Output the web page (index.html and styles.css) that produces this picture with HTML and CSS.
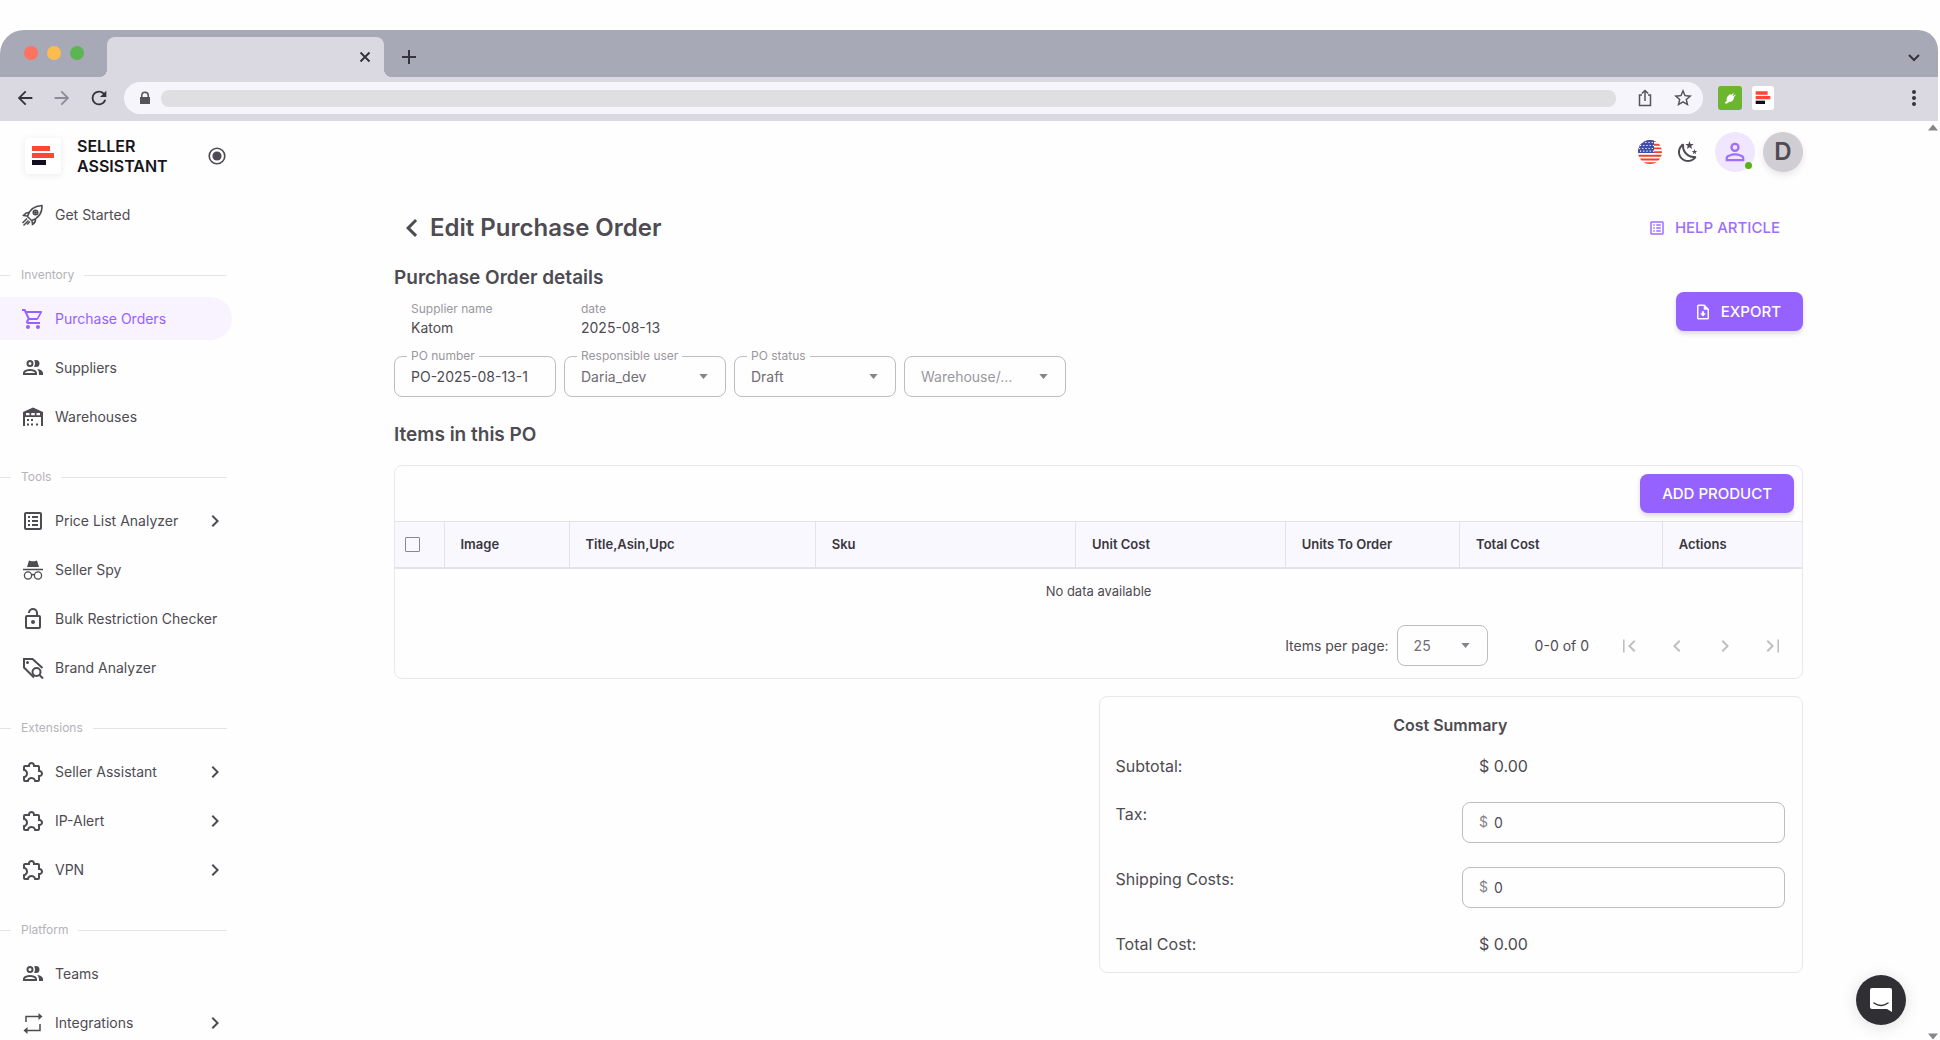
FILE: index.html
```html
<!DOCTYPE html>
<html lang="en">
<head>
    <meta charset="UTF-8">
    <meta name="viewport" content="width=device-width, initial-scale=1.0">
    <title>Edit Purchase Order</title>
    <link rel="stylesheet" href="styles.css">
</head>
<body>
    <!-- shared icons -->
    <svg class="sprite" aria-hidden="true">
        <symbol id="chevron-right" viewBox="0 0 24 24"><path d="M8.59 16.58L13.17 12L8.59 7.41L10 6l6 6-6 6z"/></symbol>
        <symbol id="chevron-left" viewBox="0 0 24 24"><path d="M15.41 16.58L10.83 12l4.58-4.59L14 6l-6 6 6 6z"/></symbol>
        <symbol id="people" viewBox="0 0 24 24"><path d="M13.07 10.41A5 5 0 0 0 13.07 4.59A3.39 3.39 0 0 1 15 4A3.5 3.5 0 0 1 15 11A3.39 3.39 0 0 1 13.07 10.41M5.5 7.5A3.5 3.5 0 1 1 9 11A3.5 3.5 0 0 1 5.5 7.5M7.5 7.5A1.5 1.5 0 1 0 9 6A1.5 1.5 0 0 0 7.5 7.5M16 17V19H2V17S2 13 9 13 16 17 16 17M14 17C13.86 16.22 12.67 15 9 15S4.07 16.31 4 17M15.95 13A5.32 5.32 0 0 1 18 17V19H22V17S22 13.37 15.94 13Z"/></symbol>
        <symbol id="puzzle" viewBox="0 0 24 24"><path d="M22,13.5C22,15.26 20.7,16.72 19,16.96V20A2,2 0 0,1 17,22H13.2V21.7A2.7,2.7 0 0,0 10.5,19C9,19 7.8,20.21 7.8,21.7V22H4A2,2 0 0,1 2,20V16.2H2.3C3.79,16.2 5,15 5,13.5C5,12 3.79,10.8 2.3,10.8H2V7A2,2 0 0,1 4,5H7.04C7.28,3.3 8.74,2 10.5,2C12.26,2 13.72,3.3 13.96,5H17A2,2 0 0,1 19,7V10.04C20.7,10.28 22,11.74 22,13.5M17,15H18.5A1.5,1.5 0 0,0 20,13.5A1.5,1.5 0 0,0 18.5,12H17V7H12V5.5A1.5,1.5 0 0,0 10.5,4A1.5,1.5 0 0,0 9,5.5V7H4V9.12C5.76,9.8 7,11.5 7,13.5C7,15.5 5.75,17.2 4,17.88V20H6.12C6.8,18.25 8.5,17 10.5,17C12.5,17 14.2,18.25 14.88,20H17V15Z"/></symbol>
        <symbol id="list-box" viewBox="0 0 24 24"><path d="M11 15H17V17H11V15M9 7H7V9H9V7M11 13H17V11H11V13M11 9H17V7H11V9M9 11H7V13H9V11M21 5V19C21 20.1 20.1 21 19 21H5C3.9 21 3 20.1 3 19V5C3 3.9 3.9 3 5 3H19C20.1 3 21 3.9 21 5M19 5H5V19H19V5M9 15H7V17H9V15Z"/></symbol>
        <symbol id="arrow-left" viewBox="0 0 24 24"><path d="M20,11V13H8L13.5,18.5L12.08,19.92L4.16,12L12.08,4.08L13.5,5.5L8,11H20Z"/></symbol>
        <symbol id="page-first" viewBox="0 0 24 24"><path d="M18.41 16.59L13.82 12l4.59-4.59L17 6l-6 6 6 6zM6 5.500h1.600v13H6z"/></symbol>
        <symbol id="brand" viewBox="0 0 24 24"><path fill="#ff4636" d="M1 2h18v5H1zM1 9h22v5H1z"/><path fill="#120c1e" d="M1 16h14v5H1z"/></symbol>
        <symbol id="caret" viewBox="0 0 10 6"><path d="M0 0h10L5 6z"/></symbol>
    </svg>

    <div class="browser">
        <div class="tab-strip">
            <div class="lights"><span class="light red"></span><span class="light yellow"></span><span class="light green"></span></div>
            <div class="tab">
                <button class="chrome-btn" aria-label="Close tab"><svg class="icon-14" viewBox="0 0 14 14"><path class="line" d="M2.500 2.500l9 9M11.500 2.500l-9 9"/></svg></button>
            </div>
            <button class="chrome-btn" aria-label="New tab"><svg class="icon-16" viewBox="0 0 16 16"><path class="line" d="M8 1v14M1 8h14"/></svg></button>
            <button class="chrome-btn tab-search" aria-label="Search tabs"><svg class="icon-14" viewBox="0 0 14 14"><path class="line" d="M2 5l5 5 5-5"/></svg></button>
        </div>
        <div class="toolbar">
            <div class="nav-buttons">
                <button class="chrome-btn" aria-label="Back"><svg class="icon-22"><use href="#arrow-left"/></svg></button>
                <button class="chrome-btn faded" aria-label="Forward"><svg class="icon-22 flip"><use href="#arrow-left"/></svg></button>
                <button class="chrome-btn" aria-label="Reload"><svg class="icon-22" viewBox="0 0 24 24"><path d="M17.65,6.35C16.2,4.9 14.21,4 12,4A8,8 0 0,0 4,12A8,8 0 0,0 12,20C15.73,20 18.84,17.45 19.73,14H17.65C16.83,16.33 14.61,18 12,18A6,6 0 0,1 6,12A6,6 0 0,1 12,6C13.66,6 15.14,6.69 16.22,7.78L13,11H20V4L17.65,6.35Z"/></svg></button>
            </div>
            <div class="omnibox">
                <svg class="icon-14" viewBox="0 0 14 14"><path d="M2 6h1V4.500a4 4 0 0 1 8 0V6h1v7H2zM4.500 6h5V4.500a2.500 2.500 0 0 0-5 0z"/></svg>
                <div class="url"></div>
                <svg class="icon-18" viewBox="0 0 18 18"><path class="line thin" d="M6 6H3.500v10.500h11V6H12M9 12V1.500M5.800 4.500L9 1.500l3.200 3"/></svg>
                <svg class="icon-18 star" viewBox="2 2 20 20"><path d="M12,15.39L8.24,17.66L9.23,13.38L5.91,10.5L10.29,10.13L12,6.09L13.71,10.13L18.09,10.5L14.77,13.38L15.76,17.66M22,9.24L14.81,8.63L12,2L9.19,8.63L2,9.24L7.45,13.97L5.82,21L12,17.27L18.18,21L16.54,13.97L22,9.24Z"/></svg>
            </div>
            <div class="extensions">
                <span class="ext ext-plug"><svg class="icon-14" viewBox="0 0 14 14"><path fill="#fff" d="M5.500 4.500L7 3.200l1.300.6L10.500 2l.3.500-1.300 2 .8.600 2-1.500.2.600-1.700 2c.3 2.500-1.600 4.800-4.300 4.600L4 12.500H2.200L1.800 12l2-2.500C3.200 7.600 4 5.700 5.500 4.500z"/></svg></span>
                <span class="ext ext-brand"><svg class="icon-16"><use href="#brand"/></svg></span>
            </div>
            <button class="chrome-btn menu-dots" aria-label="Menu"><svg class="icon-18" viewBox="0 0 18 18"><circle cx="9" cy="3" r="2"/><circle cx="9" cy="9" r="2"/><circle cx="9" cy="15" r="2"/></svg></button>
        </div>
    </div>

    <div class="app">
        <aside class="sidebar">
            <div class="brand">
                <span class="brand-logo"><svg class="icon-24"><use href="#brand"/></svg></span>
                <span class="brand-name">SELLER<br>ASSISTANT</span>
                <button class="icon-btn" aria-label="Pin menu"><svg class="icon-22" viewBox="0 0 24 24"><circle cx="12" cy="12" r="8.500" fill="none" stroke="currentColor" stroke-width="1.800"/><circle cx="12" cy="12" r="5"/></svg></button>
            </div>
            <nav>
                <ul class="menu">
                    <li><a class="menu-item" href="#">
                        <svg class="icon-24" viewBox="0 0 24 24"><g class="line thin"><path d="M8.500 15.500l-2-2C8 7.500 12 3 21 2.500c.3 8-4.500 13-10.500 15zM8 9.500c-3-.5-4 1-5.500 3l3.500.5M14.500 16c.5 3-1 4-3 5.500l-.5-3.500M6 15.500l-4.500 4.500M7.500 17.500l-5 5M9 18.500l-3 3"/><circle cx="14.500" cy="9.500" r="2.300"/></g><circle cx="14.500" cy="9.500" r="1.500"/></svg>
                        <span>Get Started</span></a></li>
                </ul>
                <h2 class="menu-title">Inventory</h2>
                <ul class="menu">
                    <li><a class="menu-item active" href="#">
                        <svg class="icon-24" viewBox="0 0 24 24"><path d="M17,18A2,2 0 0,1 19,20A2,2 0 0,1 17,22C15.89,22 15,21.1 15,20C15,18.89 15.89,18 17,18M1,2H4.27L5.21,4H20A1,1 0 0,1 21,5C21,5.17 20.95,5.34 20.88,5.5L17.3,11.97C16.96,12.58 16.3,13 15.55,13H8.1L7.2,14.63L7.17,14.75A0.25,0.25 0 0,0 7.42,15H19V17H7C5.89,17 5,16.1 5,15C5,14.65 5.09,14.32 5.24,14.04L6.6,11.59L3,4H1V2M7,18A2,2 0 0,1 9,20A2,2 0 0,1 7,22C5.89,22 5,21.1 5,20C5,18.89 5.89,18 7,18M16,11L18.78,6H6.14L8.5,11H16Z"/></svg>
                        <span>Purchase Orders</span></a></li>
                    <li><a class="menu-item" href="#">
                        <svg class="icon-24"><use href="#people"/></svg>
                        <span>Suppliers</span></a></li>
                    <li><a class="menu-item" href="#">
                        <svg class="icon-24" viewBox="0 0 24 24"><path fill-rule="evenodd" d="M2 7l10-4.500L22 7v14h-2v-9H4v9H2zM5 8v2.200h3.500V8zM10.200 8v2.200h3.600V8zM15.500 8v2.200H19V8z"/><path d="M6 14h2v2H6zM10 14h2v2h-2zM6 18.500h2v2H6zM10 18.500h2v2h-2zM15 18.500h2v2h-2z"/></svg>
                        <span>Warehouses</span></a></li>
                </ul>
                <h2 class="menu-title">Tools</h2>
                <ul class="menu">
                    <li><a class="menu-item" href="#">
                        <svg class="icon-24"><use href="#list-box"/></svg>
                        <span>Price List Analyzer</span><svg class="icon-24 more"><use href="#chevron-right"/></svg></a></li>
                    <li><a class="menu-item" href="#">
                        <svg class="icon-24" viewBox="0 0 24 24"><path d="M6 9l2-6.500 2.500.7h3l2.500-.7L18 9zM2 10.800h20v1.400H2z"/><g fill="none" stroke="currentColor" stroke-width="1.300"><circle cx="7" cy="17.500" r="3.600"/><circle cx="17" cy="17.500" r="3.600"/><path d="M10.500 17q1.500-1 3 0"/></g></svg>
                        <span>Seller Spy</span></a></li>
                    <li><a class="menu-item" href="#">
                        <svg class="icon-24" viewBox="0 0 24 24"><path d="M18,20V10H6V20H18M18,8A2,2 0 0,1 20,10V20A2,2 0 0,1 18,22H6C4.890,22 4,21.100 4,20V10A2,2 0 0,1 6,8H15V6A3,3 0 0,0 12,3A3,3 0 0,0 9,6H7A5,5 0 0,1 12,1A5,5 0 0,1 17,6V8H18M12,17A2,2 0 0,1 10,15A2,2 0 0,1 12,13A2,2 0 0,1 14,15A2,2 0 0,1 12,17Z"/></svg>
                        <span>Bulk Restriction Checker</span></a></li>
                    <li><a class="menu-item" href="#">
                        <svg class="icon-24" viewBox="0 0 24 24"><g class="line"><path d="M13 21.500L3 11.500V3h8.500l10 9"/><circle cx="15.500" cy="16" r="4"/><path d="M18.500 19l3.500 3.500"/></g><circle cx="6.500" cy="6.500" r="1.500"/></svg>
                        <span>Brand Analyzer</span></a></li>
                </ul>
                <h2 class="menu-title">Extensions</h2>
                <ul class="menu">
                    <li><a class="menu-item" href="#">
                        <svg class="icon-24"><use href="#puzzle"/></svg>
                        <span>Seller Assistant</span><svg class="icon-24 more"><use href="#chevron-right"/></svg></a></li>
                    <li><a class="menu-item" href="#">
                        <svg class="icon-24"><use href="#puzzle"/></svg>
                        <span>IP-Alert</span><svg class="icon-24 more"><use href="#chevron-right"/></svg></a></li>
                    <li><a class="menu-item" href="#">
                        <svg class="icon-24"><use href="#puzzle"/></svg>
                        <span>VPN</span><svg class="icon-24 more"><use href="#chevron-right"/></svg></a></li>
                </ul>
                <h2 class="menu-title">Platform</h2>
                <ul class="menu">
                    <li><a class="menu-item" href="#">
                        <svg class="icon-24"><use href="#people"/></svg>
                        <span>Teams</span></a></li>
                    <li><a class="menu-item" href="#">
                        <svg class="icon-24" viewBox="0 0 24 24"><path class="line thin" d="M5 11V5.500h14M19 13v6.500H5"/><path d="M17.500 2l4 3.500-4 3.500zM6.500 16l-4 3.500 4 3.500z"/></svg>
                        <span>Integrations</span><svg class="icon-24 more"><use href="#chevron-right"/></svg></a></li>
                </ul>
            </nav>
        </aside>

        <main class="content">
            <header class="user-bar">
                <button class="icon-btn" aria-label="Language">
                    <svg class="icon-24" viewBox="0 0 24 24"><clipPath id="round"><circle cx="12" cy="12" r="12"/></clipPath><g clip-path="url(#round)"><path fill="#fff" d="M0 0h24v24H0z"/><path stroke="#f5402c" stroke-width="1.900" d="M0 1h24M0 4.700h24M0 8.400h24M0 12.100h24M0 15.800h24M0 19.500h24M0 23.200h24"/><path fill="#3f4fa8" d="M0 0h16v13H0z"/><path stroke="#fff" stroke-width="1.200" stroke-dasharray="1.200 2" d="M4 2.500h12M2 5.500h14M1 8.500h15M2 11.200h14"/></g></svg>
                </button>
                <button class="icon-btn" aria-label="Dark theme">
                    <svg class="icon-24" viewBox="0 0 24 24"><path d="M17.75,4.09L15.22,6.03L16.13,9.09L13.5,7.28L10.87,9.09L11.78,6.03L9.25,4.09L12.44,4L13.5,1L14.56,4L17.75,4.09M21.25,11L19.61,12.25L20.2,14.23L18.5,13.06L16.8,14.23L17.39,12.25L15.75,11L17.81,10.95L18.5,9L19.19,10.95L21.25,11M18.97,15.95C19.8,15.87 20.69,17.05 20.16,17.8C19.84,18.25 19.5,18.67 19.08,19.07C15.17,23 8.84,23 4.94,19.07C1.03,15.17 1.03,8.83 4.94,4.93C5.34,4.53 5.76,4.17 6.21,3.85C6.96,3.32 8.14,4.21 8.06,5.04C7.79,7.9 8.75,10.87 10.95,13.06C13.14,15.26 16.1,16.22 18.97,15.95M17.33,17.97C14.5,17.81 11.7,16.64 9.53,14.5C7.36,12.31 6.2,9.5 6.04,6.68C3.23,9.82 3.34,14.64 6.35,17.66C9.37,20.67 14.19,20.78 17.33,17.97Z"/></svg>
                </button>
                <button class="avatar avatar-user" aria-label="Account">
                    <svg class="icon-28" viewBox="0 0 24 24"><path d="M12,4A4,4 0 0,1 16,8A4,4 0 0,1 12,12A4,4 0 0,1 8,8A4,4 0 0,1 12,4M12,6A2,2 0 0,0 10,8A2,2 0 0,0 12,10A2,2 0 0,0 14,8A2,2 0 0,0 12,6M12,13C14.67,13 20,14.33 20,17V20H4V17C4,14.33 9.33,13 12,13M12,14.9C9.03,14.9 5.9,16.36 5.9,17V18.1H18.1V17C18.1,16.36 14.97,14.9 12,14.9Z"/></svg>
                    <span class="online"></span>
                </button>
                <button class="avatar avatar-letter">D</button>
            </header>

            <div class="page-head">
                <button class="icon-btn" aria-label="Go back"><svg class="icon-36"><use href="#chevron-left"/></svg></button>
                <h1>Edit Purchase Order</h1>
                <a class="help" href="#"><svg class="icon-18"><use href="#list-box"/></svg>HELP ARTICLE</a>
            </div>

            <section class="details">
                <div>
                    <h2 class="section-title">Purchase Order details</h2>
                    <dl class="facts">
                        <div class="fact"><dt>Supplier name</dt><dd>Katom</dd></div>
                        <div class="fact"><dt>date</dt><dd>2025-08-13</dd></div>
                    </dl>
                    <div class="fields">
                        <div class="field">
                            <label for="po-number">PO number</label>
                            <input id="po-number" type="text" value="PO-2025-08-13-1">
                        </div>
                        <div class="field">
                            <label for="user">Responsible user</label>
                            <select id="user"><option>Daria_dev</option></select>
                            <svg class="caret"><use href="#caret"/></svg>
                        </div>
                        <div class="field">
                            <label for="status">PO status</label>
                            <select id="status"><option>Draft</option></select>
                            <svg class="caret"><use href="#caret"/></svg>
                        </div>
                        <div class="field">
                            <select id="warehouse" class="empty" aria-label="Warehouse"><option>Warehouse/...</option></select>
                            <svg class="caret"><use href="#caret"/></svg>
                        </div>
                    </div>
                </div>
                <button class="btn export"><svg class="icon-18" viewBox="0 0 24 24"><path fill-rule="evenodd" d="M14 2H6a2 2 0 0 0-2 2v16a2 2 0 0 0 2 2h12a2 2 0 0 0 2-2V8zM18 20H6V4h7v5h5z"/><path d="M10.500 11h3v3H16l-4 4-4-4h2.500z"/></svg>EXPORT</button>
            </section>

            <h2 class="section-title items-title">Items in this PO</h2>

            <section class="card">
                <div class="card-bar"><button class="btn">ADD PRODUCT</button></div>
                <table class="items">
                    <colgroup>
                        <col class="col-check"><col class="col-image"><col class="col-title"><col class="col-sku">
                        <col class="col-cost"><col class="col-units"><col class="col-total"><col class="col-actions">
                    </colgroup>
                    <thead>
                        <tr>
                            <th class="check"><input type="checkbox" aria-label="Select all"></th>
                            <th>Image</th>
                            <th>Title,Asin,Upc</th>
                            <th>Sku</th>
                            <th>Unit Cost</th>
                            <th>Units To Order</th>
                            <th>Total Cost</th>
                            <th>Actions</th>
                        </tr>
                    </thead>
                    <tbody>
                        <tr><td colspan="8">No data available</td></tr>
                    </tbody>
                </table>
                <div class="pager">
                    <label for="per-page">Items per page:</label>
                    <div class="field per-page">
                        <select id="per-page"><option>25</option></select>
                        <svg class="caret"><use href="#caret"/></svg>
                    </div>
                    <span class="range">0-0 of 0</span>
                    <div class="pager-buttons">
                        <button class="page-btn" disabled aria-label="First page"><svg class="icon-24"><use href="#page-first"/></svg></button>
                        <button class="page-btn" disabled aria-label="Previous page"><svg class="icon-24"><use href="#chevron-left"/></svg></button>
                        <button class="page-btn" disabled aria-label="Next page"><svg class="icon-24"><use href="#chevron-right"/></svg></button>
                        <button class="page-btn" disabled aria-label="Last page"><svg class="icon-24 flip"><use href="#page-first"/></svg></button>
                    </div>
                </div>
            </section>

            <section class="card summary">
                <h3>Cost Summary</h3>
                <div class="summary-row"><span>Subtotal:</span><span class="amount">$ 0.00</span></div>
                <div class="summary-row">
                    <label for="tax">Tax:</label>
                    <div class="field money"><span>$</span><input id="tax" type="text" value="0"></div>
                </div>
                <div class="summary-row">
                    <label for="shipping">Shipping Costs:</label>
                    <div class="field money"><span>$</span><input id="shipping" type="text" value="0"></div>
                </div>
                <div class="summary-row"><span>Total Cost:</span><span class="amount">$ 0.00</span></div>
            </section>
        </main>

        <div class="scrollbar"><svg class="arrow"><use href="#caret"/></svg><svg class="arrow"><use href="#caret"/></svg></div>
    </div>

    <button class="chat" aria-label="Open chat">
        <svg class="icon-28" viewBox="0 0 28 28"><path fill="#fff" d="M5 2h18a2 2 0 0 1 2 2v22l-5-3H5a2 2 0 0 1-2-2V4a2 2 0 0 1 2-2z"/><path fill="none" stroke="#302f33" stroke-width="1.500" stroke-linecap="round" d="M7 17q7 5 14 0"/></svg>
    </button>
</body>
</html>
```

FILE: styles.css
```css
*{
    box-sizing: border-box;
}

body{
    margin:0;
    padding-top:30px;
    height:100vh;
    overflow:hidden;
    display:flex;
    flex-direction: column;
    background:#fefefe;
    color:#4e4b52;
    font-family: Inter, "Liberation Sans", sans-serif;
    font-size:14px;
    line-height:20px;
}

h1, h2, h3, ul, dl, dd{
    margin:0;
    padding:0;
}

button, input, select{
    font:inherit;
    color:inherit;
}

button{
    border:0;
    padding:0;
    background:none;
    cursor:pointer;
}

a{
    color:inherit;
    text-decoration:none;
}

svg{
    display:block;
    flex:none;
    fill:currentColor;
}

.sprite{
    position:absolute;
    width:0;
    height:0;
}

.line{
    fill:none;
    stroke:currentColor;
    stroke-width:2;
}

.thin{ stroke-width:1.5; }
.flip{ transform:scaleX(-1); }

.icon-14{ width:14px; height:14px; }
.icon-16{ width:16px; height:16px; }
.icon-18{ width:18px; height:18px; }
.icon-22{ width:22px; height:22px; }
.icon-24{ width:24px; height:24px; }
.icon-28{ width:28px; height:28px; }
.icon-36{ width:36px; height:36px; }

/* browser frame */
.browser{
    flex:none;
    color:#35343c;
    margin-right:2px;
}

.tab-strip{
    display:flex;
    align-items: center;
    height:47px;
    padding:7px 17px 0 24px;
    background:#a8a9b6;
    border-radius:24px 20px 0 0;
}

.lights{
    display:flex;
    gap:9px;
    width:83px;
}

.light{
    width:14px;
    height:14px;
    margin-top:-8px;
    border-radius:50%;
}

.red{ background:#fd7360; }
.yellow{ background:#fcbb4f; }
.green{ background:#5ab552; }

.tab{
    position:relative;
    display:flex;
    align-items: center;
    justify-content: flex-end;
    width:277px;
    height:40px;
    padding-right:12px;
    margin-right:17px;
    background:#dad9e2;
    border-radius:8px 8px 0 0;
}

.tab::before, .tab::after{
    content:"";
    position:absolute;
    bottom:0;
    width:8px;
    height:8px;
}

.tab::before{
    left:-8px;
    background:radial-gradient(circle at 0 0, transparent 8px, #dad9e2 8px);
}

.tab::after{
    right:-8px;
    background:radial-gradient(circle at 100% 0, transparent 8px, #dad9e2 8px);
}

.tab-search{
    margin-left:auto;
}

.faded{
    color:#8d8c96;
}

.toolbar{
    display:flex;
    align-items: center;
    height:44px;
    padding:0 15px 2px 14px;
    background:#dad9e2;
}

.nav-buttons{
    display:flex;
    gap:15px;
    width:110px;
}

.omnibox{
    flex:1;
    display:flex;
    align-items: center;
    height:32px;
    padding:0 11px 0 14px;
    border-radius:16px;
    background:#f6f5fb;
    color:#55545b;
}

.url{
    flex:1;
    height:17px;
    margin:0 20px 0 9px;
    border-radius:8px;
    background:#dfdee0;
}

.star{
    margin-left:20px;
}

.extensions{
    display:flex;
    gap:10px;
    padding-left:15px;
}

.ext{
    display:flex;
    align-items: center;
    justify-content: center;
    width:24px;
    height:24px;
    border-radius:3px;
}

.ext-plug{ background:#6cb52f; }
.ext-brand{ background:#fff; width:22px; }

.menu-dots{
    margin-left:131px;
}

/* app */
.app{
    position:relative;
    flex:1;
    min-height:0;
    display:flex;
}

.sidebar{
    flex:none;
    width:257px;
    overflow:hidden;
}

.brand{
    display:flex;
    align-items: center;
    height:72px;
    padding:0 0 2px 25px;
}

.brand-logo{
    display:flex;
    align-items: center;
    justify-content: center;
    width:36px;
    height:36px;
    border-radius:4px;
    background:#fff;
    box-shadow:0 1px 6px rgba(80,60,90,.1);
}

.brand-name{
    width:145px;
    padding-left:16px;
    color:#17151a;
    font-size:16px;
    font-weight:600;
}

.menu{
    display:flex;
    flex-direction: column;
    gap:6px;
    list-style:none;
}

.menu-item{
    display:flex;
    align-items: center;
    gap:10px;
    height:43px;
    width:232px;
    padding:0 5px 0 21px;
    border-radius:0 22px 22px 0;
    white-space:nowrap;
}

.active{
    background:#f8f3ff;
    color:#9562ff;
}

.more{
    margin-left:auto;
}

.menu-title{
    display:flex;
    align-items: center;
    gap:10px;
    width:227px;
    margin:30px 0 13px;
    color:#b5b2b8;
    font-size:12px;
    font-weight:400;
    line-height:18px;
}

.menu-title::before, .menu-title::after{
    content:"";
    height:1px;
    background:#e6e4e8;
}

.menu-title::before{ width:11px; }
.menu-title::after{ flex:1; }

.content{
    flex:1;
    max-width:1409px;
    margin:0 auto;
}

.user-bar{
    display:flex;
    align-items: center;
    justify-content: flex-end;
    height:61px;
}

.icon-btn + .icon-btn{
    margin:0 15px 0 14px;
}

.avatar{
    position:relative;
    display:flex;
    align-items: center;
    justify-content: center;
    width:40px;
    height:40px;
    border-radius:50%;
}

.avatar-user{
    background:#f0e7ff;
    color:#a06dff;
    margin-right:8px;
}

.online{
    position:absolute;
    right:3px;
    bottom:3px;
    width:7px;
    height:7px;
    border-radius:50%;
    background:#55b510;
}

.avatar-letter{
    background:#d0ced3;
    font-size:24px;
    font-weight:600;
    box-shadow:0 3px 6px rgba(60,40,80,.12);
}

.page-head{
    display:flex;
    align-items: center;
    height:36px;
    margin-top:28px;
}

.page-head h1{
    font-size:24px;
    font-weight:600;
    line-height:32px;
}

.help{
    display:flex;
    align-items: center;
    gap:9px;
    margin-left:auto;
    padding-right:23px;
    color:#a06dff;
    font-size:15px;
    font-weight:500;
}

.section-title{
    font-size:19px;
    font-weight:600;
    line-height:28px;
}

.details{
    display:flex;
    justify-content: space-between;
    align-items: flex-start;
    margin-top:18px;
}

.facts{
    display:flex;
    gap:8px;
    margin-top:8px;
}

.fact{
    width:162px;
    padding-left:17px;
}

.fact dt{
    color:#9a979e;
    font-size:12px;
    line-height:18px;
}

.fact dd{
    line-height:20px;
}

.fields{
    display:flex;
    gap:8px;
    margin-top:18px;
}

.field{
    position:relative;
    width:162px;
    height:41px;
    border:1px solid #bfbcc2;
    border-radius:8px;
}

.field label{
    position:absolute;
    top:-10px;
    left:12px;
    padding:0 4px;
    background:#fefefe;
    color:#9a979e;
    font-size:12px;
    line-height:18px;
}

.field input, .field select{
    width:100%;
    height:100%;
    border:0;
    padding:0 16px;
    background:none;
    appearance:none;
    outline:0;
}

.field select{
    color:#706d74;
}

.field .empty{
    color:#9a979e;
}

.caret{
    position:absolute;
    top:17px;
    right:17px;
    width:9px;
    height:5px;
    color:#86838a;
    pointer-events:none;
}

.btn{
    display:flex;
    align-items: center;
    gap:9px;
    height:39px;
    padding:0 22px;
    border-radius:8px;
    background:#9562ff;
    color:#fff;
    font-size:15px;
    font-weight:500;
    box-shadow:0 3px 4px rgba(60,40,80,.16);
}

.export{
    margin-top:28px;
    padding-left:18px;
}

.items-title{
    margin-top:24px;
}

.card{
    border:1px solid #e9e7ec;
    border-radius:8px;
}

.items-title + .card{
    margin-top:16px;
}

.card-bar{
    display:flex;
    justify-content: flex-end;
    padding:8px;
}

.items{
    width:100%;
    border-collapse: collapse;
    table-layout: fixed;
    font-size:13px;
}

.col-check{ width:49px; }
.col-image{ width:125px; }
.col-title{ width:17.5%; }
.col-sku{ width:18.5%; }
.col-cost{ width:14.9%; }
.col-units{ width:12.4%; }
.col-total{ width:14.4%; }

.items th{
    height:46px;
    padding:0 16px;
    border:1px solid #e4e2e8;
    border-width:1px 0 2px 1px;
    background:#f9f8fe;
    color:#39363d;
    font-weight:600;
    text-align:left;
}

.items .check{
    border-left:0;
    padding:0 10px;
}

.check input{
    appearance:none;
    display:block;
    width:15px;
    height:15px;
    margin:0;
    border:1px solid #8a878e;
    border-radius:1px;
}

.items td{
    height:46px;
    padding:0;
    text-align:center;
}

.pager{
    display:flex;
    align-items: center;
    justify-content: flex-end;
    height:64px;
    padding-right:5px;
}

.per-page{
    width:91px;
    margin:0 47px 0 8px;
}

.range{
    margin-right:16px;
}

.pager-buttons{
    display:flex;
}

.page-btn{
    display:flex;
    align-items: center;
    justify-content: center;
    width:48px;
    height:48px;
    color:#c0bec3;
}

.summary{
    width:50%;
    margin:17px 0 0 auto;
    padding:16px 17px 16px 16px;
    font-size:16px;
    line-height:24px;
}

.summary h3{
    font-size:16px;
    font-weight:600;
    text-align:center;
}

.summary-row{
    display:flex;
    justify-content: space-between;
    margin-top:17px;
}

.summary-row + .summary-row{
    margin-top:24px;
}

.amount, .money{
    width:323px;
}

.amount{
    padding-left:17px;
}

.money{
    display:flex;
    align-items: center;
    gap:6px;
    padding-left:16px;
    font-size:14px;
}

.money span{
    color:#86838a;
}

.money input{
    padding:0;
}

/* scrollbar on the right edge */
.scrollbar{
    position:absolute;
    top:0;
    right:2px;
    bottom:0;
    width:10px;
    display:flex;
    flex-direction: column;
    justify-content: space-between;
    padding:3px 0 0;
}

.arrow{
    width:10px;
    height:7px;
    color:#86858a;
}

.arrow:first-child{
    transform:rotate(180deg);
}

.chat{
    position:absolute;
    right:34px;
    bottom:15px;
    display:flex;
    align-items: center;
    justify-content: center;
    width:50px;
    height:50px;
    border-radius:50%;
    background:#302f33;
    box-shadow:0 2px 16px rgba(0,0,0,.12);
}
```
